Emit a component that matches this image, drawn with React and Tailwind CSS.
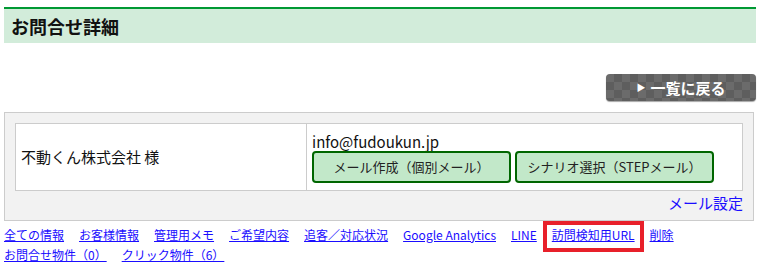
export default function App() {
  const links = [
    "全ての情報",
    "お客様情報",
    "管理用メモ",
    "ご希望内容",
    "追客／対応状況",
    "Google Analytics",
    "LINE",
    "訪問検知用URL",
    "削除",
  ];

  return (
    <main className="w-[762px] h-[276px] bg-white pl-[4px] pr-[6px] pt-[7px] font-['Noto_Sans_CJK_JP','Noto_Sans',sans-serif] text-[#111]">
      {/* HEADING */}
      <div className="h-[36px] border-t-2 border-[#009933] bg-[#d2ecda] flex items-center px-[7px]">
        <h1 className="text-[18px] font-bold leading-none">お問合せ詳細</h1>
      </div>

      {/* BACK BUTTON */}
      <div className="flex justify-end mt-[31px]">
        <button className="w-[150px] h-[27px] rounded-[4px] bg-[#626262] bg-[repeating-conic-gradient(#5e5e5e_0%_25%,#6b6b6b_0%_50%)] bg-size-[16px_16px] shadow-[0_1px_1px_rgba(0,0,0,0.35)] flex items-center justify-center gap-[5px] text-white text-[15px] font-bold leading-none">
          <span className="text-[9px]">▶</span>
          <span>一覧に戻る</span>
        </button>
      </div>

      {/* DETAIL BOX */}
      <section className="mt-[11px] w-[750px] border border-[#cccccc] bg-[#f2f2f2] px-[10px] pt-[10px] pb-[7px]">
        <div className="grid grid-cols-[291px_1fr] h-[68px] border border-[#cccccc] bg-white">
          <div className="flex items-center px-[5px] text-[15px] border-r border-[#cccccc]">
            不動くん株式会社 様
          </div>
          <div className="px-[5px] pt-[8px]">
            <p className="text-[15px] leading-[19px]">info@fudoukun.jp</p>
            <div className="flex gap-[4px]">
              <button className="w-[199px] h-[32px] rounded-[4px] border-2 border-[#006600] bg-[#c2e8c9] text-[13px] text-[#222]">
                メール作成（個別メール）
              </button>
              <button className="w-[199px] h-[32px] rounded-[4px] border-2 border-[#006600] bg-[#c2e8c9] text-[13px] text-[#222]">
                シナリオ選択（STEPメール）
              </button>
            </div>
          </div>
        </div>
        <div className="flex justify-end pt-[2px]">
          <a href="#" className="text-[15px] leading-[20px] text-[#1a0dff]">
            メール設定
          </a>
        </div>
      </section>

      {/* LINKS */}
      <nav className="mt-[4px] text-[12px] leading-[20px] text-[#1a0dff]">
        <div className="flex gap-x-[15px]">
          {links.map((l) => (
            <span key={l} className="relative">
              <a href="#" className="underline">
                {l}
              </a>
              {l === "訪問検知用URL" && (
                <span className="absolute -left-[9px] -right-[9px] -top-[4px] -bottom-[7px] border-4 border-[#e8202a]" />
              )}
            </span>
          ))}
        </div>
        <div className="flex gap-x-[15px]">
          <a href="#" className="underline">お問合せ物件（0）</a>
          <a href="#" className="underline">クリック物件（6）</a>
        </div>
      </nav>
    </main>
  );
}
